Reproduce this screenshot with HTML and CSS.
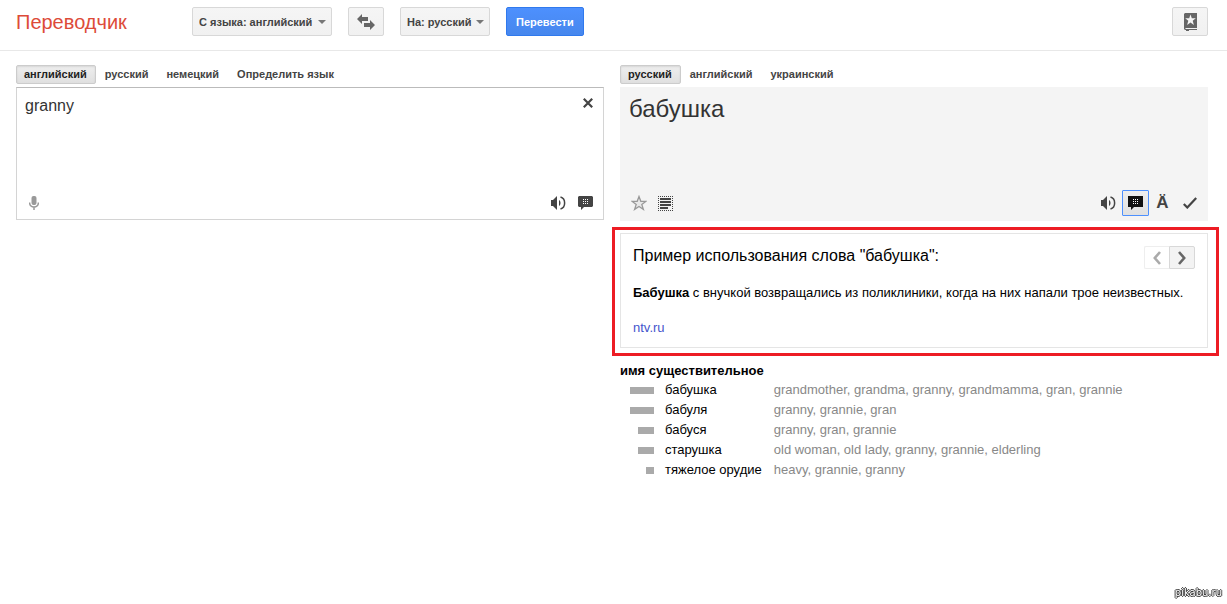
FILE: index.html
```html
<!DOCTYPE html>
<html lang="ru">
<head>
<meta charset="utf-8">
<title>Переводчик</title>
<link rel="stylesheet" href="styles.css">
</head>
<body>
<header class="header">
  <h1 class="logo">Переводчик</h1>
  <div class="toolbar">
    <div class="picker picker-from">
      <select class="btn picker-select" aria-label="Исходный язык"><option>С языка: английский</option></select>
    </div>
    <button class="btn btn-icon" type="button" aria-label="Поменять языки">
      <svg width="18" height="16" viewBox="0 0 18 16" fill="#666"><path d="M0 5l5-5v3h6v4H5v3z"/><path d="M18 11l-5 5v-3H7V9h6V6z" stroke="#f3f3f3" stroke-width="1" paint-order="stroke"/></svg>
    </button>
    <div class="picker picker-to">
      <select class="btn picker-select" aria-label="Язык перевода"><option>На: русский</option></select>
    </div>
    <button class="btn btn-primary" type="button">Перевести</button>
  </div>
  <button class="btn btn-icon" type="button" aria-label="Разговорник">
    <svg width="13" height="18" viewBox="0 0 13 18"><path fill="#666" d="M1 0h12v15H1.500v1H13v1H5v1H2v-1H1l-1-1V1z"/><path fill="#f5f5f5" d="M6.500 1.500l1.300 3.800h4L8.700 7.800l1.200 4.200-3.400-2.500L3.100 12l1.200-4.200-3.100-2.500h4z"/></svg>
  </button>
</header>

<main class="columns">
  <section class="column">
    <div class="tabs">
      <button class="tab tab-active" type="button">английский</button>
      <button class="tab" type="button">русский</button>
      <button class="tab" type="button">немецкий</button>
      <button class="tab" type="button">Определить язык</button>
    </div>
    <div class="panel panel-source">
      <div class="panel-top">
        <textarea class="source-text" aria-label="Исходный текст" spellcheck="false">granny</textarea>
        <button class="icon icon-clear" type="button" aria-label="Очистить">
          <svg width="10" height="10" viewBox="0 0 10 10" fill="none" stroke="#444" stroke-width="2.200"><path d="M.8.800l8.400 8.400M9.200.800L.8 9.200"/></svg>
        </button>
      </div>
      <div class="tools">
        <button class="icon" type="button" aria-label="Голосовой ввод">
          <svg width="10" height="14" viewBox="0 0 10 14"><rect x="2.500" y="0" width="5" height="9" rx="2" fill="#999"/><path d="M.6 6.500c0 6 8.800 6 8.800 0M5 11v3" fill="none" stroke="#999" stroke-width="1.500"/></svg>
        </button>
        <span class="spacer"></span>
        <button class="icon" type="button" aria-label="Прослушать">
          <svg width="15" height="14" viewBox="0 0 15 14"><path fill="#444" d="M0 4h2l4-4v14l-4-4H0zM8 4c2 1 2 5 0 6z"/><path d="M9.500 1c5.500 1.500 5.500 10.500 0 12" fill="none" stroke="#444" stroke-width="1.500"/></svg>
        </button>
        <button class="icon" type="button" aria-label="Примеры">
          <svg width="15" height="14" viewBox="0 0 15 14"><path fill="#444" d="M1 0h13l1 1v9l-1 1H6l-3 3v-3H1l-1-1V1z"/><path stroke="#fff" stroke-dasharray="1 1" d="M5 3.500h5M5 5.500h5M5 7.500h5"/></svg>
        </button>
      </div>
    </div>
  </section>

  <section class="column">
    <div class="tabs">
      <button class="tab tab-active" type="button">русский</button>
      <button class="tab" type="button">английский</button>
      <button class="tab" type="button">украинский</button>
    </div>
    <div class="panel panel-result">
      <div class="result-text">бабушка</div>
      <div class="tools">
        <button class="icon" type="button" aria-label="Сохранить">
          <svg width="16" height="16" viewBox="0 0 16 16"><path fill="#e8e8e8" stroke="#999" stroke-width="1.300" d="M8 1.500l1.800 4.800 5 .1-4 3 1.600 5L8 11.500l-4.400 2.900 1.600-5-4-3 5-.1z"/></svg>
        </button>
        <button class="icon" type="button" aria-label="Выделить">
          <svg width="15" height="15" viewBox="0 0 15 15" fill="none" stroke="#444"><path stroke-dasharray="1 1" d="M0 .5h15M0 14.500h15M.5 0v15M14.500 0v15"/><path stroke-width="2" d="M2 3h11M2 6h11M2 9h11M2 12h8"/></svg>
        </button>
        <span class="spacer"></span>
        <button class="icon" type="button" aria-label="Прослушать перевод">
          <svg width="15" height="14" viewBox="0 0 15 14"><path fill="#444" d="M0 4h2l4-4v14l-4-4H0zM8 4c2 1 2 5 0 6z"/><path d="M9.500 1c5.500 1.500 5.500 10.500 0 12" fill="none" stroke="#444" stroke-width="1.500"/></svg>
        </button>
        <button class="icon icon-active" type="button" aria-label="Пример использования">
          <svg width="15" height="14" viewBox="0 0 15 14"><path fill="#111" d="M0 0h15v11H6l-3 3v-3H0z"/><path stroke="#fff" stroke-dasharray="1 1" d="M5 3.500h5M5 5.500h5M5 7.500h5"/></svg>
        </button>
        <button class="icon icon-letter" type="button" aria-label="Транслитерация">Ä</button>
        <button class="icon" type="button" aria-label="Подтвердить">
          <svg width="14" height="12" viewBox="0 0 14 12"><path fill="none" stroke="#444" stroke-width="2.200" d="M.8 7l3.500 3.500L13.200 1"/></svg>
        </button>
      </div>
    </div>

    <article class="example">
      <div class="example-head">
        <h2 class="example-title">Пример использования слова "бабушка":</h2>
        <div class="pager">
          <button class="pager-btn pager-off" type="button" aria-label="Назад"><svg width="8" height="14" viewBox="0 0 8 14"><path fill="none" stroke="currentColor" stroke-width="2.600" d="M7 1L1.800 7 7 13"/></svg></button>
          <button class="pager-btn" type="button" aria-label="Вперёд"><svg width="8" height="14" viewBox="0 0 8 14"><path fill="none" stroke="currentColor" stroke-width="2.600" d="M1 1l5.200 6L1 13"/></svg></button>
        </div>
      </div>
      <p class="example-text"><b>Бабушка</b> с внучкой возвращались из поликлиники, когда на них напали трое неизвестных.</p>
      <a class="example-link" href="#">ntv.ru</a>
    </article>

    <table class="dict">
      <caption class="dict-title">имя существительное</caption>
      <tbody>
        <tr><td class="dict-rank"><div class="bar bar-high"></div></td><td class="dict-word">бабушка</td><td class="dict-back">grandmother, grandma, granny, grandmamma, gran, grannie</td></tr>
        <tr><td class="dict-rank"><div class="bar bar-high"></div></td><td class="dict-word">бабуля</td><td class="dict-back">granny, grannie, gran</td></tr>
        <tr><td class="dict-rank"><div class="bar bar-mid"></div></td><td class="dict-word">бабуся</td><td class="dict-back">granny, gran, grannie</td></tr>
        <tr><td class="dict-rank"><div class="bar bar-mid"></div></td><td class="dict-word">старушка</td><td class="dict-back">old woman, old lady, granny, grannie, elderling</td></tr>
        <tr><td class="dict-rank"><div class="bar bar-low"></div></td><td class="dict-word">тяжелое орудие</td><td class="dict-back">heavy, grannie, granny</td></tr>
      </tbody>
    </table>
  </section>
</main>
<div class="watermark">pikabu.ru</div>
</body>
</html>
```
FILE: styles.css
```css
* { box-sizing: border-box; }
body {
  margin: 0;
  background: #fff;
  color: #000;
  font: 13px/20px "Liberation Sans", Arial, sans-serif;
}
button, select, textarea { font-family: inherit; margin: 0; }
svg { display: block; }

.header {
  display: flex;
  align-items: flex-start;
  padding: 7px 19px 12px 16px;
  border-bottom: 1px solid #e8e8e8;
}
.logo {
  width: 176px;
  margin: 0;
  color: #dd4b39;
  font-size: 20px;
  font-weight: normal;
  line-height: 31px;
}
.toolbar { display: flex; flex: 1; gap: 16px; }
.btn {
  display: flex;
  align-items: center;
  justify-content: center;
  height: 29px;
  padding: 0 8px;
  border: 1px solid #d8d8d8;
  border-radius: 2px;
  background: linear-gradient(#f5f5f5, #f1f1f1);
  color: #444;
  font-size: 11px;
  font-weight: bold;
}
.btn-icon { width: 36px; padding: 0; }
.btn-primary {
  padding: 0 9px;
  border-color: #3079ed;
  background: linear-gradient(#4d90fe, #4787ed);
  color: #fff;
}
.picker { position: relative; }
.picker-from { width: 140px; }
.picker-to { width: 90px; }
.picker-select { width: 100%; padding: 0 6px; appearance: none; }
.picker::after {
  content: "";
  position: absolute;
  top: 13px;
  right: 6px;
  border: 4px solid transparent;
  border-top-color: #777;
  border-bottom: 0;
  pointer-events: none;
}

.columns {
  display: grid;
  grid-template-columns: 1fr 1fr;
  gap: 16px;
  padding: 14px 19px 0 16px;
}
.column { min-width: 0; }
.tabs { display: flex; gap: 1px; height: 22px; align-items: flex-start; }
.tab {
  height: 19px;
  padding: 0 8px 0 7px;
  border: 1px solid transparent;
  border-radius: 2px;
  background: none;
  color: #444;
  font-size: 11px;
  font-weight: bold;
  line-height: 17px;
}
.tab-active {
  border-color: #ccc;
  background: linear-gradient(#eee, #e0e0e0);
  box-shadow: inset 0 1px 2px rgba(0, 0, 0, 0.1);
  color: #222;
}

.panel { display: flex; flex-direction: column; justify-content: space-between; }
.panel-source {
  min-height: 133px;
  border: 1px solid #d4d4d4;
  border-top-color: #bbb;
}
.panel-result { min-height: 134px; background: #f4f4f4; }
.panel-top { display: flex; align-items: flex-start; padding: 2px 2px 0 8px; }
.source-text {
  flex: 1;
  height: 72px;
  padding: 6px 0;
  border: 0;
  outline: 0;
  resize: none;
  color: #333;
  font-size: 16px;
  line-height: 20px;
}
.result-text { padding: 8px 9px; color: #333; font-size: 24px; line-height: 28px; }
.tools { display: flex; align-items: center; padding: 0 5px 5px; }
.spacer { flex: 1; }
.icon {
  display: flex;
  align-items: center;
  justify-content: center;
  width: 27px;
  height: 26px;
  padding: 0;
  border: 0;
  background: none;
}
.panel-source .tools { padding: 0 4px 3px 3px; }
.icon-active {
  border: 1px solid #4d90fe;
  border-radius: 1px;
  background: linear-gradient(#eee, #e0e0e0);
}
.icon-letter { color: #444; font-size: 17px; font-weight: bold; }

.example {
  position: relative;
  margin-top: 12px;
  padding: 12px 12px 9px;
  border: 1px solid #e5e5e5;
}
.example::after {
  content: "";
  position: absolute;
  inset: -7px -12px -9px -9px;
  border: 3px solid #ed1c24;
  pointer-events: none;
}
.example-head { display: flex; justify-content: space-between; }
.example-title { margin: 0; font-size: 16px; font-weight: normal; line-height: 20px; }
.pager { display: flex; }
.pager-btn {
  display: flex;
  align-items: center;
  justify-content: center;
  width: 26px;
  height: 23px;
  padding: 0;
  border: 1px solid #d8d8d8;
  border-radius: 0 2px 2px 0;
  background: #f3f3f3;
  color: #666;
}
.pager-off {
  width: 25px;
  border-color: #eee;
  border-right: 0;
  border-radius: 2px 0 0 2px;
  background: #fff;
  color: #aaa;
}
.example-text { margin: 14px 0 15px; }
.example-link { display: block; color: #45c; text-decoration: none; }

.dict { margin-top: 14px; border-collapse: collapse; }
.dict-title { font-weight: bold; line-height: 18px; text-align: left; }
.dict td { height: 20px; padding: 0; white-space: nowrap; }
.dict .dict-rank { width: 34px; }
.dict .dict-word { padding: 0 12px 0 11px; }
.dict-back { color: #888; }
.bar { height: 7px; margin-left: auto; background: #aaa; }
.bar-high { width: 24px; }
.bar-mid { width: 16px; }
.bar-low { width: 8px; }

.watermark {
  position: fixed;
  right: 5px;
  bottom: 4px;
  color: #fff;
  font: 10px/14px "DejaVu Sans", sans-serif;
  text-shadow: 1px 0 #333, -1px 0 #333, 0 1px #333, 0 -1px #333;
}
```
